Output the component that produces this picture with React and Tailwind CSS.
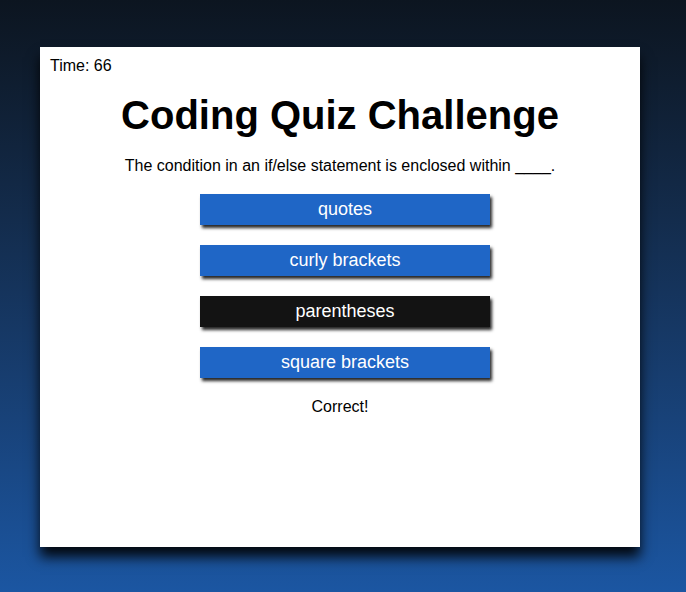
import React from 'react';

const answers = [
  { label: 'quotes', picked: false },
  { label: 'curly brackets', picked: false },
  { label: 'parentheses', picked: true },
  { label: 'square brackets', picked: false },
];

export default function App() {
  return (
    <div className="w-[686px] h-[592px] bg-gradient-to-b from-[#0c1520] to-[#1b56a2] pt-[47px] pl-[40px] font-['Liberation_Sans',Arial,sans-serif] overflow-hidden">
      <div className="w-[600px] h-[500px] bg-white shadow-[0_10px_12px_rgba(0,0,0,0.9)] flex flex-col">
        <div className="pl-[10px] pt-[9px] text-[16px] leading-[20px] text-black">Time: 66</div>

        <div className="flex flex-col items-center">
          <h1 className="mt-[16px] text-[40px] leading-[46px] font-bold text-black">Coding Quiz Challenge</h1>
          <p className="mt-[18px] text-[16px] leading-[20px] text-black">
            The condition in an if/else statement is enclosed within ____.
          </p>

          <div className="mt-[18px] pl-[10px] flex flex-col gap-[20px]">
            {answers.map((a) => (
              <button
                key={a.label}
                className={`w-[290px] h-[31px] text-white text-[18px] leading-[31px] shadow-[2px_3px_3px_rgba(0,0,0,0.85)] ${
                  a.picked ? 'bg-[#131313]' : 'bg-[#1f66c6]'
                }`}
              >
                {a.label}
              </button>
            ))}
          </div>

          <p className="mt-[19px] text-[16px] leading-[20px] text-black">Correct!</p>
        </div>
      </div>
    </div>
  );
}
